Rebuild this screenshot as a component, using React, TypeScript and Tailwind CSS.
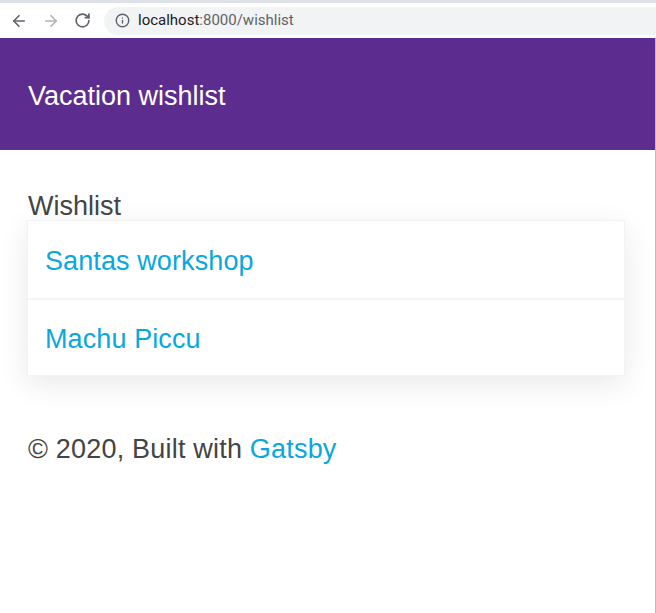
import React from 'react';
import { ArrowLeft, ArrowRight, RotateCw, Info } from 'lucide-react';

const items = ['Santas workshop', 'Machu Piccu'];

const BrowserBar: React.FC = () => (
  <div className="h-[38px] bg-white border-t-[3px] border-[#dee1e6] flex items-center">
    <div className="flex items-center gap-[14px] pl-[10px] text-[#5f6368]">
      <ArrowLeft size={18} strokeWidth={2.2} />
      <ArrowRight size={18} strokeWidth={2.2} className="text-[#b0b3b7]" />
      <RotateCw size={17} strokeWidth={2.4} />
    </div>
    <div className="ml-[13px] h-[28px] flex-1 rounded-l-full bg-[#f1f3f4] flex items-center pl-[11px]">
      <Info size={15} strokeWidth={2.2} className="text-[#5f6368]" />
      <span className="ml-[8px] text-[15px] font-['Roboto',sans-serif] text-[#202124]">
        localhost<span className="text-[#5f6368]">:8000/wishlist</span>
      </span>
    </div>
  </div>
);

export default function App() {
  return (
    <div className="w-[656px] h-[613px] bg-white font-['Liberation_Sans',Arial,sans-serif] overflow-hidden">
      <BrowserBar />
      <div className="w-[656px] h-[575px] border-r border-[#bdbdbd]">
        <header className="h-[112px] bg-[#5c2d8f] flex items-center px-[28px]">
          <h1 className="text-[27px] text-white leading-none mt-[4px]">Vacation wishlist</h1>
        </header>

        <main className="px-[27px] pt-[43px]">
          <h2 className="text-[27px] text-[#444] leading-[27px] pl-[1px]">Wishlist</h2>
          <ul className="w-[598px] bg-white shadow-[0_8px_28px_rgba(0,0,0,0.09)] border border-[#f3f3f3]">
            {items.map((item, i) => (
              <li
                key={item}
                className={`h-[77px] flex items-center px-[17px] pt-[3px] ${i > 0 ? 'border-t-2 border-[#f5f5f5]' : ''}`}
              >
                <a href="#" className="text-[27px] text-[#0aa7df] leading-none tracking-[0.1px]">
                  {item}
                </a>
              </li>
            ))}
          </ul>
        </main>

        <footer className="px-[28px] pt-[60px] text-[27px] text-[#444] leading-none tracking-[0.2px]">
          © 2020, Built with <a href="#" className="text-[#0aa7df]">Gatsby</a>
        </footer>
      </div>
    </div>
  );
}
